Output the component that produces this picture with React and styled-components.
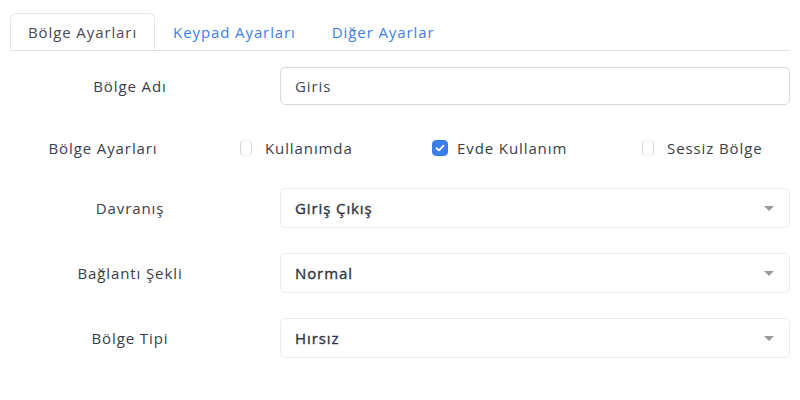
import React from 'react'
import styled, { createGlobalStyle } from 'styled-components'

const GlobalStyle = createGlobalStyle`
  body {
    margin: 0;
    background: #fff;
    font-family: 'Open Sans', 'Noto Sans', sans-serif;
  }
`

const Page = styled.div`
  width: 780px;
  padding: 13px 10px 0 10px;
`

const TabBar = styled.div`
  display: flex;
  border-bottom: 1px solid #dee2e6;
  height: 37px;
`

const Tab = styled.div`
  display: flex;
  align-items: center;
  padding: 0 17px;
  font-size: 15px;
  letter-spacing: 0.9px;
  color: ${p => (p.active ? '#474b55' : '#3d7fe8')};
  background: #fff;
  border: 1px solid ${p => (p.active ? '#e3e6ea' : 'transparent')};
  border-bottom: ${p => (p.active ? '1px solid #fff' : 'none')};
  border-radius: 6px 6px 0 0;
  margin-bottom: -1px;
  height: ${p => (p.active ? '37px' : '36px')};
  box-sizing: border-box;
`

const Row = styled.div`
  display: flex;
  align-items: center;
  margin-top: ${p => p.top}px;
  height: ${p => p.h}px;
`

const Label = styled.div`
  width: ${p => p.w}px;
  flex-shrink: 0;
  text-align: center;
  font-size: 15px;
  letter-spacing: 0.9px;
  color: #3a3e48;
`

const Field = styled.div`
  flex: 1;
  margin-left: 30px;
  height: ${p => p.h}px;
  box-sizing: border-box;
  border: 1px solid ${p => (p.soft ? '#ececec' : '#d6d8dc')};
  border-radius: 5px;
  display: flex;
  align-items: center;
  justify-content: space-between;
  padding: 0 14px;
  font-size: 15px;
  letter-spacing: 0.9px;
  color: ${p => (p.soft ? '#2f3441' : '#444852')};
  -webkit-text-stroke: ${p => (p.soft ? '0.35px' : '0')};
`

const Caret = styled.span`
  width: 0;
  height: 0;
  border-left: 5px solid transparent;
  border-right: 5px solid transparent;
  border-top: 5px solid #9a9a9a;
  margin-right: 1px;
`

const Checks = styled.div`
  display: flex;
  align-items: center;
  padding-left: 44px;
`

const CheckItem = styled.label`
  display: flex;
  align-items: center;
  width: ${p => p.w}px;
  font-size: 15px;
  letter-spacing: 0.9px;
  color: #3a3e48;
`

const Box = styled.span`
  width: ${p => (p.checked ? 16 : 12)}px;
  height: 16px;
  box-sizing: border-box;
  border-radius: 4px;
  margin-right: ${p => (p.checked ? 9 : 13)}px;
  display: flex;
  align-items: center;
  justify-content: center;
  background: ${p => (p.checked ? '#3b7ee8' : '#fff')};
  border: 1px solid ${p => (p.checked ? '#3b7ee8' : '#d4d6da')};
  border-top-color: ${p => (p.checked ? '#3b7ee8' : '#f1f1f1')};
  border-bottom-color: ${p => (p.checked ? '#3b7ee8' : '#f1f1f1')};
`

const Check = () => (
  <svg width='10' height='8' viewBox='0 0 10 8'>
    <path d='M1.5 4.2 L4 6.4 L8.5 1.6' fill='none' stroke='#fff' strokeWidth='1.8' strokeLinecap='round' strokeLinejoin='round' />
  </svg>
)

const selects = [
  { label: 'Davranış', value: 'Giriş Çıkış', top: 30 },
  { label: 'Bağlantı Şekli', value: 'Normal', top: 25 },
  { label: 'Bölge Tipi', value: 'Hırsız', top: 25 }
]

export default function App () {
  return (
    <Page>
      <GlobalStyle />
      <TabBar>
        <Tab active>Bölge Ayarları</Tab>
        <Tab>Keypad Ayarları</Tab>
        <Tab>Diğer Ayarlar</Tab>
      </TabBar>

      <Row top={16} h={38}>
        <Label w={240}>Bölge Adı</Label>
        <Field h={38}>Giris</Field>
      </Row>

      <Row top={33} h={20}>
        <Label w={186}>Bölge Ayarları</Label>
        <Checks>
          <CheckItem w={192}><Box />Kullanımda</CheckItem>
          <CheckItem w={210}><Box checked><Check /></Box>Evde Kullanım</CheckItem>
          <CheckItem w={140}><Box />Sessiz Bölge</CheckItem>
        </Checks>
      </Row>

      {selects.map(s => (
        <Row key={s.label} top={s.top} h={40}>
          <Label w={240}>{s.label}</Label>
          <Field h={40} soft>{s.value}<Caret /></Field>
        </Row>
      ))}
    </Page>
  )
}
